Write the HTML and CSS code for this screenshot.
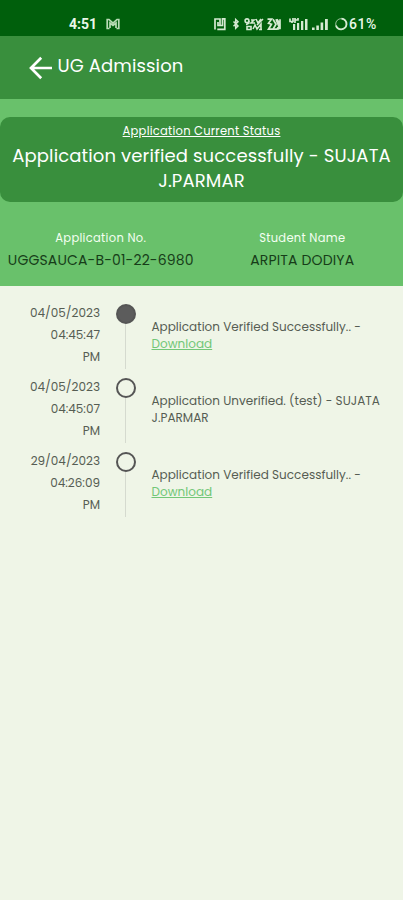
FILE: index.html
```
<!DOCTYPE html>
<html lang="en">
<head>
<meta charset="utf-8">
<title>UG Admission</title>
<link rel="stylesheet" href="styles.css">
</head>
<body>
<div class="statusbar">
  <span class="clock">4:51</span>
  <svg class="gmail" width="14" height="12" viewBox="0 0 14 12" fill="none" stroke="#b9dcb6" stroke-width="1.700"><path d="M3.500 10.500H1.200V1.500H3L7 5.200L11 1.500h1.800V10.500H10.500M4 10V5L7 7.500L10 5V10"/></svg>
  <svg class="tray" width="116" height="16" viewBox="0 0 116 16" fill="none" stroke="#d5ead2" stroke-width="1.600">
    <path d="M2 13.500V3H7v6.500M4.300 13.300H11.800V2.800H9.500V9.500H5V6" stroke-width="1.700"/>
    <path d="M20.500 5.500l4.500 4.500-2.300 2.300V3.500L25 5.700l-4.500 4.500" stroke-width="1.500"/>
    <g stroke-width="1.600"><circle cx="34" cy="4.800" r="1.900"/><path d="M36 5q0 3-3 3.500M38 4h3l-3 3h4M43 3l2 4 3-4M34 10.500h4v3h-4zM40 13l2-4 2 4 4-5v5M44 9l6-6M46 13.500h3"/></g>
    <path d="M54.500 3.200h4l-3 4 3 1-3 5h3.500M60 3.200l3 5-3 5h4l3-5-3-5M63 3.200l4 10M67 3.200v10M57 13h9" stroke-width="1.700"/>
    <path d="M77 2.500v3h3V2M79 5v2M82 2v5M82 4h3V2" stroke-width="1.700"/>
    <g fill="#d5ead2" stroke="none"><rect x="80" y="8" width="2.200" height="6"/><rect x="84" y="7" width="2.200" height="7"/><rect x="88" y="5" width="2.300" height="9"/><rect x="92" y="3" width="2.500" height="11"/><rect x="99" y="11.500" width="2.600" height="2.500"/><rect x="103.300" y="9.500" width="2.600" height="4.500"/><rect x="107.600" y="6.500" width="2.600" height="7.500"/><rect x="112" y="3" width="2.800" height="11"/></g>
  </svg>
  <svg class="battery" width="14" height="14" viewBox="0 0 14 14" fill="none" stroke="#d5ead2"><circle cx="7" cy="7" r="5.300" stroke-width="1" opacity=".7"/><path d="M7.500 1.700A5.300 5.300 0 0 1 7 12.300A5.300 5.300 0 0 1 2 8.500" stroke-width="1.800"/></svg>
  <span class="percent">61%</span>
</div>
<header class="appbar">
  <svg width="24" height="24" viewBox="0 0 24 24" fill="none" stroke="#fff" stroke-width="2.700"><path d="M23 12H2.500M12.200 1.800L2 12l10.200 10.200"/></svg>
  <h1 class="title">UG Admission</h1>
</header>
<section class="summary">
  <div class="current">
    <div class="caption">Application Current Status</div>
    <div class="state">Application verified successfully - SUJATA<br>J.PARMAR</div>
  </div>
  <div class="facts">
    <div><div class="label">Application No.</div><div class="value">UGGSAUCA-B-01-22-6980</div></div>
    <div><div class="label">Student Name</div><div class="value">ARPITA DODIYA</div></div>
  </div>
</section>
<main class="timeline">
  <div class="event">
    <div class="time">04/05/2023<br>04:45:47<br>PM</div>
    <div class="track"><i class="dot filled"></i></div>
    <div class="detail">Application Verified Successfully.. -<br><a class="link">Download</a></div>
  </div>
  <div class="event">
    <div class="time">04/05/2023<br>04:45:07<br>PM</div>
    <div class="track"><i class="dot"></i></div>
    <div class="detail">Application Unverified. (test) - SUJATA<br>J.PARMAR</div>
  </div>
  <div class="event">
    <div class="time">29/04/2023<br>04:26:09<br>PM</div>
    <div class="track"><i class="dot"></i></div>
    <div class="detail">Application Verified Successfully.. -<br><a class="link">Download</a></div>
  </div>
</main>
</body>
</html>
```
FILE: styles.css
```
* { box-sizing: border-box; }
body {
  margin: 0;
  min-height: 900px;
  background: #eff5e7;
  font-family: Poppins, Inter, sans-serif;
  white-space: nowrap;
}
.statusbar {
  height: 36px;
  background: #005f0c;
  color: #eaf7e8;
  display: flex;
  align-items: center;
  padding: 12px 0 0 69px;
  font-family: Roboto, sans-serif;
}
.statusbar svg { flex: none; }
.clock { font-size: 14px; font-weight: 700; width: 37px; line-height: 16px; }
.gmail { margin-right: 93px; }
.battery { margin-left: 5px; }
.percent { font-size: 14px; font-weight: 500; letter-spacing: 0.5px; margin-left: 1px; line-height: 16px; }
.appbar {
  height: 63px;
  background: #398f3d;
  color: #fff;
  display: flex;
  align-items: center;
  padding-left: 29px;
}
.title {
  margin: 0 0 4px 4.500px;
  font-size: 18px;
  font-weight: 400;
  letter-spacing: 0.12px;
}
.summary {
  height: 187px;
  padding-top: 18px;
  background: #69c16b;
}
.current {
  height: 85px;
  padding-top: 4px;
  border-radius: 10px;
  background: #398f3d;
  color: #fff;
  text-align: center;
}
.caption {
  font-size: 11.500px;
  line-height: 20px;
  text-decoration: underline;
  letter-spacing: 0.25px;
}
.state { font-size: 18px; line-height: 25px; margin-top: 2px; letter-spacing: 0.13px; }
.facts {
  display: grid;
  grid-template-columns: 1fr 1fr;
  padding-top: 27px;
  text-align: center;
}
.label { color: #f4fff2; font-size: 11.500px; line-height: 18px; letter-spacing: 0.3px; }
.value { color: #173d19; font-size: 14px; line-height: 26px; letter-spacing: 0.15px; }
.timeline {
  display: flex;
  flex-direction: column;
  gap: 7.400px;
  padding-top: 16px;
  color: #565d53;
}
.event {
  display: grid;
  grid-template-columns: 100px 51.500px 1fr;
  height: 66.600px;
}
.time { text-align: right; font-size: 12px; line-height: 22.200px; }
.track {
  display: flex;
  flex-direction: column;
  align-items: center;
  padding-top: 2px;
}
.track::after { content: ""; flex: 1; width: 1px; background: #d5dacf; }
.dot {
  width: 20px;
  height: 20px;
  border: 2px solid #555;
  border-radius: 50%;
}
.filled { background: #5c5c5c; }
.detail { align-self: center; padding-bottom: 1px; font-size: 12px; line-height: 17px; letter-spacing: 0.02px; }
.link { color: #72c777; text-decoration: underline; }
```
